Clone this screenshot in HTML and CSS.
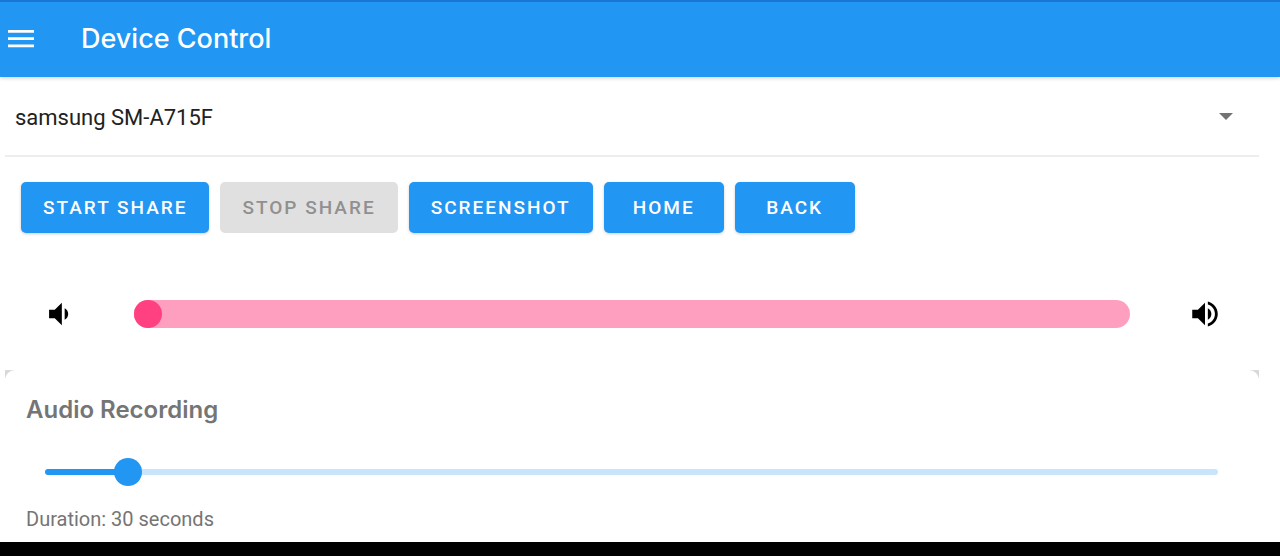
FILE: index.html
```html
<!DOCTYPE html>
<html lang="en">
<head>
<meta charset="utf-8">
<meta name="viewport" content="width=device-width, initial-scale=1">
<title>Device Control</title>
<link rel="stylesheet" href="styles.css">
</head>
<body>
<header class="app-bar">
  <button class="menu-button" type="button" aria-label="Open menu">
    <svg width="26" height="18" viewBox="0 0 26 18" fill="#fff"><path d="M0 0h26v2.700H0zM0 7.300h26v2.700H0zM0 14.600h26v2.700H0z"/></svg>
  </button>
  <h1 class="app-title">Device Control</h1>
</header>
<main class="content">
  <div class="device-row">
    <select class="device-select" aria-label="Device">
      <option>samsung SM-A715F</option>
    </select>
    <svg class="caret" width="14" height="7" viewBox="0 0 14 7" fill="#737373"><path d="M0 0h14L7 7z"/></svg>
  </div>
  <div class="actions">
    <button class="action" type="button">START SHARE</button>
    <button class="action" type="button" disabled>STOP SHARE</button>
    <button class="action" type="button">SCREENSHOT</button>
    <button class="action" type="button">HOME</button>
    <button class="action" type="button">BACK</button>
  </div>
  <div class="volume-row">
    <svg class="volume-icon" viewBox="0 0 24 24"><path d="M18.5 12c0-1.77-1-3.29-2.5-4.03v8.05c1.5-.73 2.5-2.25 2.5-4.02zM5 9v6h4l5 5V4L9 9H5z"/></svg>
    <input class="volume-slider" type="range" min="0" max="100" value="0" aria-label="Volume">
    <svg class="volume-icon" viewBox="0 0 24 24"><path d="M3 9v6h4l5 5V4L7 9H3zm13.500 3c0-1.770-1-3.290-2.500-4.030v8.050c1.500-.730 2.500-2.250 2.500-4.020zM14 3.230v2.060c2.890.860 5 3.540 5 6.710s-2.110 5.850-5 6.710v2.060c4.010-.910 7-4.490 7-8.770s-2.990-7.860-7-8.770z"/></svg>
  </div>
  <div class="card-frame">
    <section class="card">
      <h2 class="card-title">Audio Recording</h2>
      <input class="duration-slider" id="duration" type="range" min="0" max="100" value="6">
      <label class="duration-label" for="duration">Duration: 30 seconds</label>
    </section>
  </div>
</main>
<footer class="nav-strip"></footer>
</body>
</html>
```
FILE: styles.css
```css
* { box-sizing: border-box; }

body {
  margin: 0;
  min-height: 100vh;
  display: flex;
  flex-direction: column;
  background: #fff;
  color: #212121;
  font-family: Roboto, "Liberation Sans", sans-serif;
}

.app-bar {
  display: flex;
  align-items: center;
  gap: 47px;
  height: 77px;
  padding: 0 8px 1px;
  background: #2196f3;
  border-top: 2px solid #1976d2;
  box-shadow: 0 1px 4px rgba(0, 0, 0, 0.2);
}

.menu-button {
  display: flex;
  padding: 0;
  border: 0;
  background: none;
}

.app-title {
  margin: 0;
  color: #fff;
  font-family: Inter, sans-serif;
  font-size: 27px;
  font-weight: 500;
  line-height: 32px;
}

.content {
  flex: 1;
  padding: 0 21px 0 5px;
}

.device-row {
  display: flex;
  align-items: center;
  height: 80px;
  padding: 0 26px 0 10px;
  border-bottom: 2px solid #eee;
}

.device-select {
  flex: 1;
  height: 64px;
  padding: 2px 0 0;
  border: 0;
  appearance: none;
  background: none;
  color: #212121;
  font: 400 22px Roboto, sans-serif;
}

.caret { pointer-events: none; }

.actions {
  display: flex;
  flex-wrap: wrap;
  gap: 11px;
  padding: 25px 16px 0;
}

.action {
  min-width: 120px;
  height: 51px;
  padding: 0 22px;
  border: 0;
  border-radius: 5px;
  background: #2196f3;
  box-shadow: 0 1px 3px rgba(0, 0, 0, 0.2);
  color: #fff;
  font: 500 19px Roboto, sans-serif;
  letter-spacing: 2px;
}

.action:disabled {
  background: #e0e0e0;
  box-shadow: none;
  color: #909090;
}

.volume-row {
  display: flex;
  align-items: center;
  gap: 58px;
  padding: 64px 37px 0;
}

.volume-icon {
  width: 34px;
  height: 34px;
  flex: none;
}

.volume-slider,
.duration-slider {
  min-width: 0;
  margin: 0;
  appearance: none;
  background: none;
}

.volume-slider {
  flex: 1;
  height: 28px;
  border-radius: 14px;
  background: #ff9fbf;
}

.volume-slider::-webkit-slider-thumb {
  appearance: none;
  width: 28px;
  height: 28px;
  border-radius: 50%;
  background: #ff4081;
}

.card-frame {
  margin-top: 39px;
  background: linear-gradient(#d8d8d8 8px, #fff 8px);
}

.card {
  display: flex;
  flex-direction: column;
  padding: 24px 21px 0;
  border-radius: 10px 10px 0 0;
  background: #fff;
}

.card-title {
  margin: 0;
  color: #757575;
  font-family: Inter, sans-serif;
  font-size: 24px;
  font-weight: 600;
  line-height: 32px;
}

.duration-slider {
  height: 28px;
  margin: 32px 20px 0 19px;
}

.duration-slider::-webkit-slider-runnable-track {
  height: 6px;
  border-radius: 3px;
  background: linear-gradient(90deg, #2196f3 7%, #c8e5fc 7%);
}

.duration-slider::-webkit-slider-thumb {
  appearance: none;
  width: 28px;
  height: 28px;
  margin-top: -11px;
  border-radius: 50%;
  background: #2196f3;
}

.duration-label {
  margin-top: 20px;
  color: #757575;
  font-size: 20px;
  line-height: 26px;
}

.nav-strip {
  height: 14px;
  background: #000;
}
```
